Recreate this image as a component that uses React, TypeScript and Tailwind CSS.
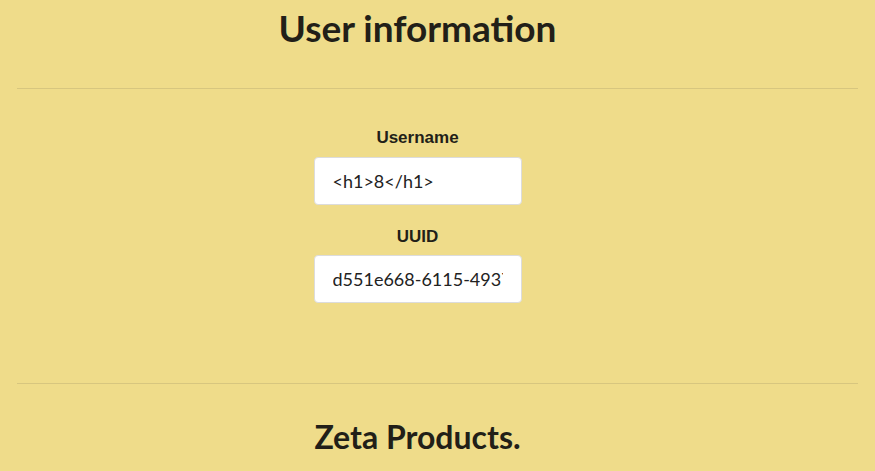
import React from "react";

export default function App() {
  return (
    <div className="min-h-screen w-full bg-[#efdc8a] text-[#221f18] overflow-hidden">
      <div className="pr-[40px] text-center">
        <h1 className="mt-[5px] text-[37px] leading-[46px] font-bold font-['Lato',sans-serif]">
          User information
        </h1>
      </div>
      <hr className="mx-[17px] mt-[37px] border-0 border-t border-[#d7c67f]" />
      <div className="pr-[40px] flex flex-col items-center pt-[39px]">
        <label className="text-[17px] leading-[20px] font-bold font-['Liberation_Sans',Arial,sans-serif]">
          Username
        </label>
        <input
          readOnly
          value="<h1>8</h1>"
          className="mt-[9px] w-[208px] h-[48px] rounded-[4px] border border-[#dcdcdc] bg-white px-[18px] text-[18px] text-[#222] font-['Lato',sans-serif] outline-none"
        />
        <label className="mt-[22px] text-[17px] leading-[20px] font-bold font-['Liberation_Sans',Arial,sans-serif]">
          UUID
        </label>
        <input
          readOnly
          value="d551e668-6115-4937-9a0b-4c3e4b0f2a11"
          className="mt-[8px] w-[208px] h-[48px] rounded-[4px] border border-[#dcdcdc] bg-white px-[18px] text-[18px] text-[#222] font-['Lato',sans-serif] outline-none"
        />
      </div>
      <hr className="mx-[17px] mt-[80px] border-0 border-t border-[#d7c67f]" />
      <div className="pr-[40px] text-center">
        <h2 className="mt-[33px] text-[32px] leading-[40px] font-bold font-['Lato',sans-serif]">
          Zeta Products.
        </h2>
      </div>
    </div>
  );
}
